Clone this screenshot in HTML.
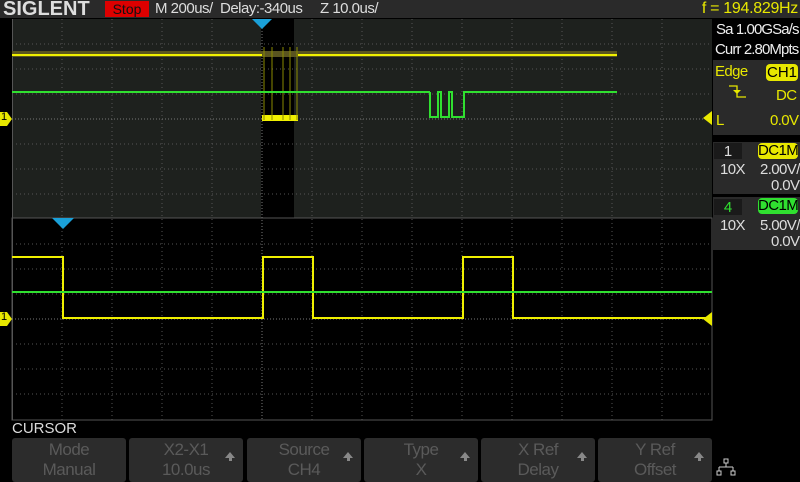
<!DOCTYPE html><html><head><style>
body{margin:0;width:800px;height:480px;background:#000;position:relative;overflow:hidden;font-family:"Liberation Sans",sans-serif;}
.a{position:absolute;white-space:nowrap}
.btn{position:absolute;top:438px;height:44px;width:114px;background:#2c2c2c;border-radius:3px;color:#5a5a5a;font-size:17px;letter-spacing:-0.5px;text-align:center;line-height:20px;padding-top:2px;box-sizing:border-box}
.btn i{position:absolute;right:8px;top:14px;width:0;height:0;border-left:5px solid transparent;border-right:5px solid transparent;border-bottom:6px solid #888}
.btn i:after{content:"";position:absolute;left:-1.5px;top:5px;width:3px;height:4px;background:#888}
.p{position:absolute;left:713px;width:87px;background:#2a2a2a}
.t{font-size:15px;position:absolute;white-space:nowrap;letter-spacing:-0.6px}
</style></head><body>
<div class="a" style="left:0;top:0;width:800px;height:18px;background:#2a2a2a"></div>
<div class="a" style="left:3px;top:-2px;font-size:20px;font-weight:bold;color:#ddd">SIGLENT</div>
<div class="a" style="left:105px;top:1px;width:44px;height:16px;background:#d00;color:#111;font-size:14px;text-align:center;line-height:16px">Stop</div>
<div class="a" style="left:155px;top:0;color:#ddd;font-size:15px;letter-spacing:-0.5px">M 200us/</div>
<div class="a" style="left:220px;top:0;color:#ddd;font-size:15px;letter-spacing:-0.5px">Delay:-340us</div>
<div class="a" style="left:320px;top:0;color:#ddd;font-size:15px;letter-spacing:-0.5px">Z 10.0us/</div>
<div class="a" style="right:2px;top:0;color:#e8e800;font-size:16px;letter-spacing:-0.3px">f = 194.829Hz</div>
<svg class="a" style="left:0;top:0" width="800" height="480">
<rect x="12" y="19" width="700" height="199" fill="#1e211e"/>
<rect x="261" y="19" width="33" height="199" fill="#000"/>
<rect x="12" y="218" width="700" height="202" fill="#000" stroke="#555"/>
<line x1="12.5" y1="19" x2="12.5" y2="420" stroke="#555"/>
<g stroke="#555" stroke-dasharray="1,3">
<path d="M62 19V420M112 19V420M162 19V420M212 19V420M312 19V420M362 19V420M412 19V420M462 19V420M512 19V420M562 19V420M612 19V420M662 19V420"/>
<path d="M12 44H712M12 69H712M12 94H712M12 144H712M12 169H712M12 194H712M12 244H712M12 269H712M12 294H712M12 344H712M12 369H712M12 394H712"/>
</g>
<g stroke="#777" stroke-dasharray="1,2"><path d="M262 19V420M12 119H712M12 319H712"/></g>
<rect x="12" y="51" width="605" height="6" fill="#5a5520"/>
<path d="M12 55H262M298 55H617" stroke="#f0f000" stroke-width="2"/>
<rect x="262" y="115" width="36" height="6" fill="#f0f000"/>
<path d="M264 47V120M272 47V120M283 47V120M290 47V120M297 47V120" stroke="#8a8a00"/>
<path d="M12 92H430M430 92V117H438V92H441V117H449V92H452V117H464V92H617" stroke="#30e030" stroke-width="2" fill="none"/>
<path d="M12 257H63V318H263V257H313V318H463V257H513V318H712" stroke="#f0f000" stroke-width="2" fill="none"/>
<path d="M12 292H712" stroke="#30e030" stroke-width="2"/>
<path d="M52 218H74L63 229Z" fill="#1aa0d8"/>
<path d="M252 19H272L262 29Z" fill="#1aa0d8"/>
<path d="M0 112H7L12 119L7 126H0Z" fill="#e8e800"/>
<path d="M0 312H7L12 319L7 326H0Z" fill="#e8e800"/>
<path d="M712 312L703 319L712 326Z" fill="#e8e800"/>
<path d="M712 111L703 118L712 125Z" fill="#e8e800"/>
</svg>
<div class="a" style="left:1px;top:111px;font-size:11px;color:#000">1</div>
<div class="a" style="left:1px;top:311px;font-size:11px;color:#000">1</div>
<div class="p" style="top:19px;height:39px;background:#000"></div>
<div class="t" style="left:716px;top:21px;color:#eee;letter-spacing:-0.9px">Sa 1.00GSa/s</div>
<div class="t" style="left:715px;top:41px;color:#eee;letter-spacing:-0.9px">Curr 2.80Mpts</div>
<div class="p" style="top:60px;height:75px"></div>
<div class="t" style="left:715px;top:63px;color:#e8e800">Edge</div>
<div class="a" style="left:766px;top:64px;width:32px;height:17px;background:#e8e800;border-radius:4px;color:#000;font-size:15px;text-align:center;line-height:17px">CH1</div>
<svg class="a" style="left:728px;top:84px" width="20" height="16"><path d="M1 2H9V13H18" stroke="#e8e800" fill="none" stroke-width="1.3"/><path d="M5 6H13L9 10Z" fill="#e8e800"/></svg>
<div class="t" style="left:776px;top:87px;color:#e8e800">DC</div>
<div class="t" style="left:716px;top:112px;color:#e8e800">L</div>
<div class="t" style="left:770px;top:112px;color:#e8e800">0.0V</div>
<div class="p" style="top:142px;height:52px"></div>
<div class="a" style="left:714px;top:143px;width:28px;height:16px;background:#1a1a1a;color:#ddd;font-size:15px;text-align:center">1</div>
<div class="a" style="left:758px;top:143px;width:40px;height:16px;background:#e8e800;border-radius:4px;color:#000;font-size:15px;letter-spacing:-0.6px;text-align:center;line-height:16px">DC1M</div>
<div class="t" style="left:720px;top:161px;color:#ddd">10X</div>
<div class="t" style="left:760px;top:161px;color:#ddd">2.00V/</div>
<div class="t" style="left:771px;top:177px;color:#ddd">0.0V</div>
<div class="p" style="top:197px;height:53px"></div>
<div class="a" style="left:714px;top:199px;width:28px;height:16px;background:#1a1a1a;color:#30e030;font-size:15px;text-align:center">4</div>
<div class="a" style="left:758px;top:198px;width:40px;height:16px;background:#30e030;border-radius:4px;color:#000;font-size:15px;letter-spacing:-0.6px;text-align:center;line-height:16px">DC1M</div>
<div class="t" style="left:720px;top:217px;color:#ddd">10X</div>
<div class="t" style="left:760px;top:217px;color:#ddd">5.00V/</div>
<div class="t" style="left:771px;top:233px;color:#ddd">0.0V</div>
<div class="a" style="left:12px;top:420px;color:#ddd;font-size:15px">CURSOR</div>
<div class="btn" style="left:12px">Mode<br>Manual</div>
<div class="btn" style="left:129px">X2-X1<br>10.0us<i></i></div>
<div class="btn" style="left:247px">Source<br>CH4<i></i></div>
<div class="btn" style="left:364px">Type<br>X<i></i></div>
<div class="btn" style="left:481px">X Ref<br>Delay<i></i></div>
<div class="btn" style="left:598px">Y Ref<br>Offset<i></i></div>
<svg class="a" style="left:716px;top:458px" width="22" height="20"><path d="M8 1H12V5H8ZM10 5V9M3 9H17M3 9V13M17 9V13M1 13H5V17H1ZM15 13H19V17H15Z" stroke="#ccc" fill="none"/></svg>
</body></html>
